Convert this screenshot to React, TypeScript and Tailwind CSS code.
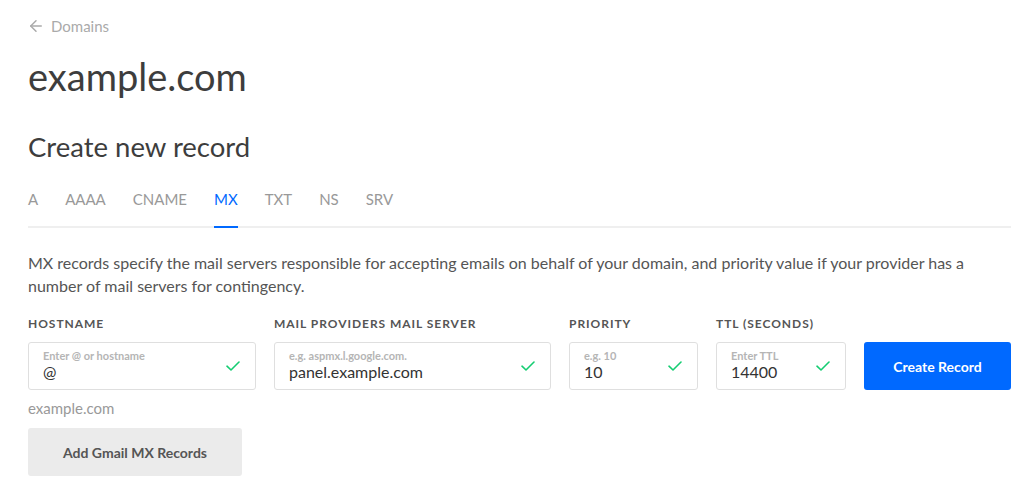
import { ArrowLeft } from 'lucide-react'

const tabs = ['A', 'AAAA', 'CNAME', 'MX', 'TXT', 'NS', 'SRV']

function Check() {
  return (
    <svg width="14" height="10" viewBox="0 0 14 10" fill="none" className="shrink-0">
      <path d="M1 5.2 L5 9 L13 1" stroke="#15cd72" strokeWidth="1.6" strokeLinecap="round" strokeLinejoin="round" />
    </svg>
  )
}

function Field({ label, placeholder, value, width }: { label: string; placeholder: string; value: string; width: string }) {
  return (
    <div className={`flex flex-col shrink-0 ${width}`}>
      <label className="text-[12px] font-bold tracking-[0.08em] text-[#555] uppercase leading-none h-[12px] mb-[12px]">{label}</label>
      <div className="flex items-center h-[48px] border border-[#dfdfdf] rounded-[3px] pl-[14px] pr-[15px] bg-white">
        <div className="flex-1 flex flex-col -mt-[2px]">
          <span className="text-[11px] font-bold text-[#b5b5b5] leading-[13px]">{placeholder}</span>
          <span className="text-[16px] text-[#333] leading-[20px]">{value}</span>
        </div>
        <Check />
      </div>
    </div>
  )
}

export default function App() {
  return (
    <div className="bg-white w-[1021px] h-[495px] pl-[28px] pr-[10px] pt-[16px] overflow-hidden text-[#333]" style={{ fontFamily: 'Lato, "Open Sans", sans-serif' }}>
      <div className="flex items-center gap-[6px] text-[15px] text-[#aaa] h-[20px]">
        <ArrowLeft size={18} strokeWidth={2} className="-ml-[1px]" />
        <span>Domains</span>
      </div>
      <h1 className="text-[38px] leading-[40px] mt-[20px] text-[#3d3d3d]">example.com</h1>
      <h2 className="text-[27.5px] leading-[30px] mt-[36px] text-[#3d3d3d]">Create new record</h2>
      <div className="flex gap-[27px] mt-[27px] border-b-2 border-[#efefef]">
        {tabs.map(t => (
          <div
            key={t}
            className={`text-[15px] pb-[17px] -mb-[2px] border-b-2 leading-[20px] ${t === 'MX' ? 'text-[#0069ff] border-[#0069ff]' : 'text-[#999] border-transparent'}`}
          >
            {t}
          </div>
        ))}
      </div>
      <p className="text-[16px] leading-[23px] text-[#555] mt-[23px]">
        MX records specify the mail servers responsible for accepting emails on behalf of your domain, and priority value if your provider has a number of mail servers for contingency.
      </p>
      <div className="flex gap-[18px] mt-[21px] items-end">
        <Field label="Hostname" placeholder="Enter @ or hostname" value="@" width="w-[228px]" />
        <Field label="Mail Providers Mail Server" placeholder="e.g. aspmx.l.google.com." value="panel.example.com" width="w-[277px]" />
        <Field label="Priority" placeholder="e.g. 10" value="10" width="w-[129px]" />
        <Field label="TTL (Seconds)" placeholder="Enter TTL" value="14400" width="w-[130px]" />
        <button className="w-[147px] shrink-0 h-[48px] rounded-[3px] bg-[#0069ff] text-white text-[14px] font-bold">Create Record</button>
      </div>
      <div className="text-[15px] text-[#999] mt-[8px] leading-[20px]">example.com</div>
      <button className="mt-[10px] w-[214px] h-[48px] rounded-[3px] bg-[#ebebeb] text-[#555] text-[14px] font-bold">Add Gmail MX Records</button>
    </div>
  )
}
